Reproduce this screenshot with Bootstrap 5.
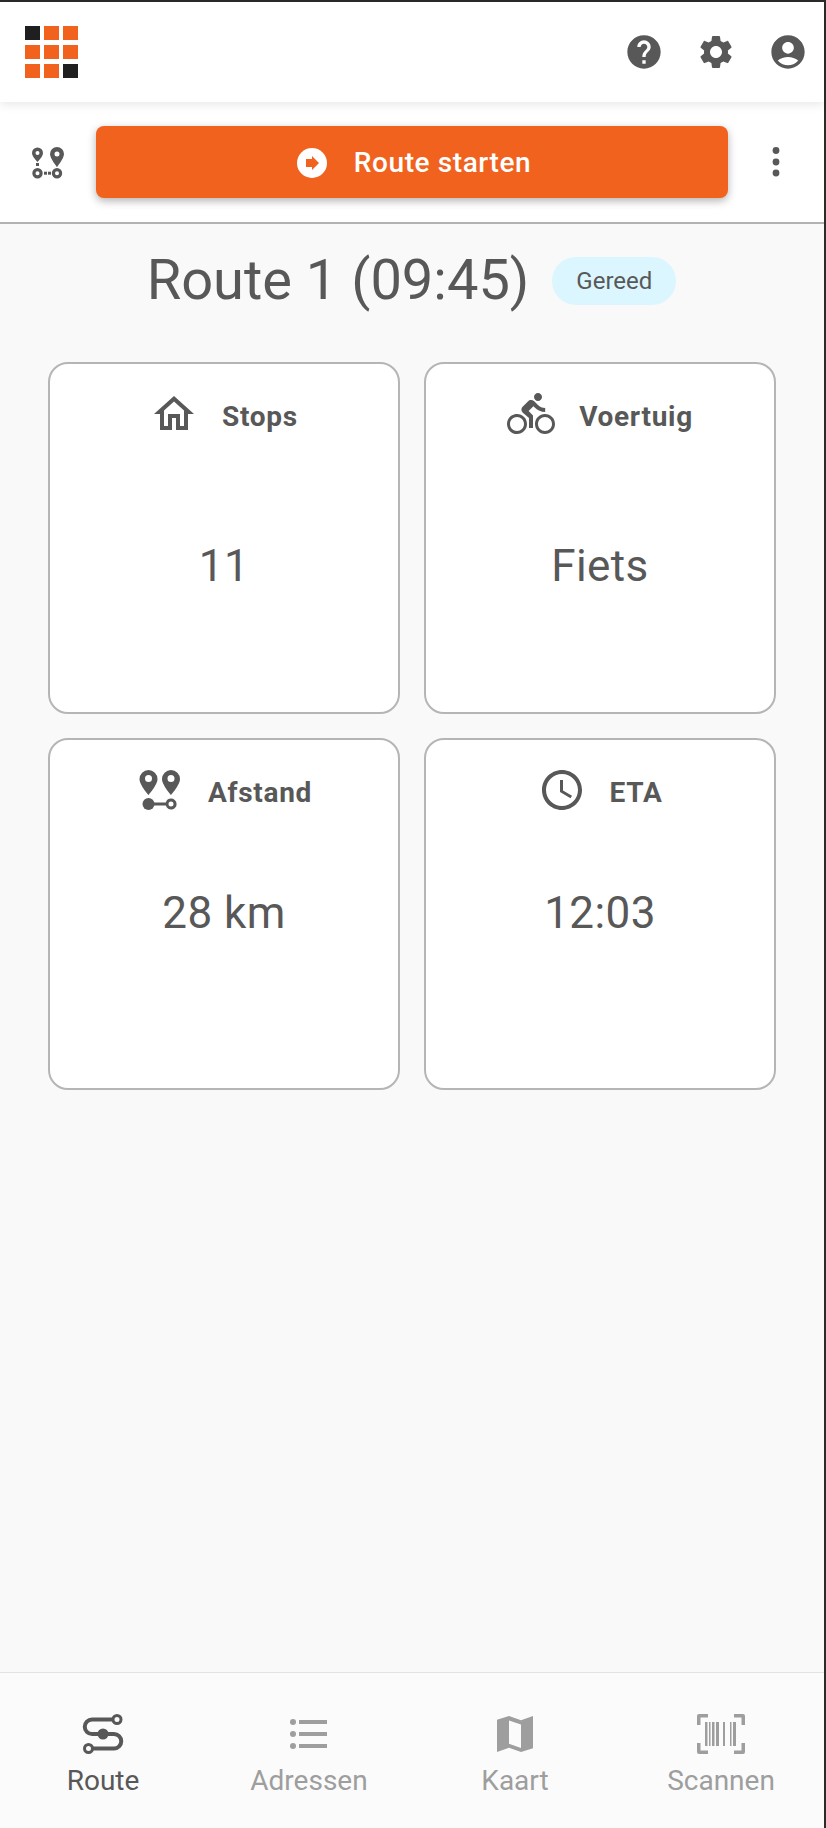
<!DOCTYPE html>
<html lang="nl">
<head>
<meta charset="UTF-8" />
<meta name="viewport" content="width=device-width, initial-scale=1" />
<title>Route</title>
<link href="https://cdn.jsdelivr.net/npm/bootstrap@5.3.0/dist/css/bootstrap.min.css" rel="stylesheet" />
<style>
  body {
    font-family: Roboto, "Liberation Sans", sans-serif;
    color: #585858;
    background: #2b2b2b;
  }
  svg {
    fill: currentColor;
    display: block;
    flex-shrink: 0;
  }
  .app-shell {
    height: 1828px;
    margin-right: 2px;
    padding-top: 2px;
  }
  .app-main {
    background: #f9f9f9;
  }
  .top-bar {
    height: 100px;
    padding: 0 16px 0 25px;
    background: #fff;
    box-shadow: 0 2px 10px rgba(0, 0, 0, .1);
    position: relative;
    z-index: 2;
  }
  .logo-grid {
    display: grid;
    grid-template-columns: repeat(3, 14.5px);
    grid-auto-rows: 14.5px;
    gap: 4.7px;
  }
  .logo-grid span {
    background: #f0621e;
  }
  .logo-grid .logo-dark {
    background: #1f1f1f;
  }
  .top-icons {
    gap: 32px;
  }
  .action-bar {
    height: 122px;
    background: #fff;
    border-bottom: 2px solid #b2b2b2;
  }
  .action-side {
    width: 96px;
  }
  .btn.start-btn {
    height: 72px;
    gap: 27px;
    padding: 1px 0 0 4px;
    background: #f0621e;
    border: 0;
    border-radius: 8px;
    color: #fff;
    font-size: 28px;
    font-weight: 500;
    letter-spacing: .6px;
    box-shadow: 0 3px 8px rgba(0, 0, 0, .3);
  }
  .title-row {
    height: 114px;
    padding-bottom: 3px;
    padding-right: 1px;
    gap: 23px;
  }
  .route-title {
    font-size: 56px;
    font-weight: 400;
    line-height: 1;
    margin: 0;
  }
  .status-pill {
    width: 124px;
    height: 48px;
    margin-top: 2px;
    border-radius: 24px;
    background: #dbf6ff;
    font-size: 24px;
  }
  .stat-grid {
    padding: 0 48px;
  }
  .card.stat-card {
    height: 352px;
    border: 2px solid #b5b5b5;
    border-radius: 20px;
    padding-top: 26px;
    color: #585858;
    background: #fff;
  }
  .stat-head {
    gap: 24px;
    font-size: 28px;
    font-weight: 700;
    letter-spacing: .7px;
  }
  .stat-head-text {
    padding-top: 5px;
  }
  .stat-value {
    font-size: 44px;
    line-height: 52px;
    letter-spacing: .4px;
    text-align: center;
  }
  .stat-value-high {
    margin-top: 102px;
  }
  .stat-value-low {
    margin-top: 73px;
  }
  .bottom-nav {
    height: 156px;
    background: #fbfbfb;
    border-top: 1px solid #e2e2e2;
    padding-top: 37px;
  }
  .nav-cell {
    color: #9e9e9e;
    font-size: 28px;
    line-height: 46px;
  }
  .nav-cell.is-active {
    color: #585858;
  }
</style>
</head>
<body>

<div class="app-shell d-flex flex-column">
  <header class="top-bar d-flex align-items-center justify-content-between">
    <div class="logo-grid" aria-label="Logo">
      <span class="logo-dark"></span><span></span><span></span>
      <span></span><span></span><span></span>
      <span></span><span></span><span class="logo-dark"></span>
    </div>
    <div class="top-icons d-flex">
      <svg width="40" height="40" viewBox="0 0 24 24"><path d="M12 2C6.48 2 2 6.48 2 12s4.48 10 10 10 10-4.48 10-10S17.52 2 12 2zm1 17h-2v-2h2v2zm2.07-7.75l-.9.92C13.45 12.9 13 13.5 13 15h-2v-.5c0-1.1.45-2.1 1.17-2.83l1.24-1.26c.37-.36.59-.86.59-1.41 0-1.1-.9-2-2-2s-2 .9-2 2H8c0-2.21 1.79-4 4-4s4 1.79 4 4c0 .88-.36 1.68-.93 2.25z"/></svg>
      <svg width="40" height="40" viewBox="0 0 24 24"><path d="M19.14 12.94c.04-.3.06-.61.06-.94 0-.32-.02-.64-.07-.94l2.03-1.58c.18-.14.23-.41.12-.61l-1.92-3.32c-.12-.22-.37-.29-.59-.22l-2.39.96c-.5-.38-1.03-.7-1.62-.94L14.4 2.81c-.04-.24-.24-.41-.48-.41h-3.84c-.24 0-.43.17-.47.41L9.25 5.35c-.59.24-1.13.57-1.62.94l-2.39-.96c-.22-.08-.47 0-.59.22L2.74 8.87c-.12.21-.08.47.12.61l2.03 1.58c-.05.3-.09.63-.09.94s.02.64.07.94l-2.03 1.58c-.18.14-.23.41-.12.61l1.92 3.32c.12.22.37.29.59.22l2.39-.96c.5.38 1.03.7 1.62.94l.36 2.54c.05.24.24.41.48.41h3.84c.24 0 .44-.17.47-.41l.36-2.54c.59-.24 1.13-.56 1.62-.94l2.39.96c.22.08.47 0 .59-.22l1.92-3.32c.12-.22.07-.47-.12-.61l-2.01-1.58zM12 15.6c-1.98 0-3.6-1.62-3.6-3.6s1.62-3.6 3.6-3.6 3.6 1.62 3.6 3.6-1.62 3.6-3.6 3.6z"/></svg>
      <svg width="40" height="40" viewBox="0 0 24 24"><path d="M12 2C6.48 2 2 6.48 2 12s4.48 10 10 10 10-4.48 10-10S17.52 2 12 2zm0 4c1.93 0 3.5 1.57 3.5 3.5S13.93 13 12 13s-3.5-1.57-3.5-3.5S10.07 6 12 6zm0 14c-2.03 0-4.43-.82-6.14-2.88C7.55 15.8 9.68 15 12 15s4.45.8 6.14 2.12C16.43 19.18 14.03 20 12 20z"/></svg>
    </div>
  </header>

  <div class="action-bar d-flex align-items-center">
    <div class="action-side d-flex justify-content-center">
      <svg width="40" height="40" viewBox="0 0 40 40">
        <path fill-rule="evenodd" d="M9.500 5.500a5.500 5.500 0 0 0-5.500 5.500c0 3.500 5.500 9 5.500 9s5.500-5.500 5.500-9a5.500 5.500 0 0 0-5.500-5.500zm0 3.500a2 2 0 1 1 0 4 2 2 0 0 1 0-4z"/>
        <path fill-rule="evenodd" d="M29 5a7 7 0 0 0-7 7c0 4.500 7 13 7 13s7-8.500 7-13a7 7 0 0 0-7-7zm0 4.500a2.500 2.500 0 1 1 0 5 2.500 2.500 0 0 1 0-5z"/>
        <path fill-rule="evenodd" d="M9.500 26a5.200 5.200 0 1 1 0 10.400 5.200 5.200 0 0 1 0-10.400zm0 3.200a2 2 0 1 0 0 4 2 2 0 0 0 0-4zM29 26a5.200 5.200 0 1 1 0 10.400 5.200 5.200 0 0 1 0-10.400zm0 3.200a2 2 0 1 0 0 4 2 2 0 0 0 0-4z"/>
        <rect x="8" y="21" width="3" height="3"/><rect x="16" y="29.700" width="3" height="3"/><rect x="20" y="29.700" width="3" height="3"/>
      </svg>
    </div>
    <button type="button" class="btn start-btn flex-grow-1 d-flex align-items-center justify-content-center">
      <svg width="30" height="30" viewBox="0 0 30 30"><circle cx="15" cy="15" r="15" fill="#fff"/><path fill="#f0621e" d="M9 11h6V8l7 7-7 7v-3H9z"/></svg>
      Route starten
    </button>
    <div class="action-side d-flex justify-content-center">
      <svg width="12" height="32" viewBox="0 0 12 32"><circle cx="6" cy="4.500" r="3.400"/><circle cx="6" cy="16" r="3.400"/><circle cx="6" cy="27" r="3.400"/></svg>
    </div>
  </div>

  <main class="app-main flex-grow-1">
    <div class="title-row d-flex align-items-center justify-content-center">
      <h1 class="route-title">Route 1 (09:45)</h1>
      <span class="status-pill d-inline-flex align-items-center justify-content-center">Gereed</span>
    </div>
    <div class="stat-grid mt-4">
      <div class="row g-4">
        <div class="col-6">
          <div class="card stat-card">
            <div class="stat-head d-flex align-items-center justify-content-center">
              <svg width="48" height="48" viewBox="0 0 24 24"><path d="M12 5.690l5 4.500V18h-2v-6H9v6H7v-7.810l5-4.500M12 3L2 12h3v8h6v-6h2v6h6v-8h3L12 3z"/></svg>
              <span class="stat-head-text">Stops</span>
            </div>
            <div class="stat-value stat-value-high">11</div>
          </div>
        </div>
        <div class="col-6">
          <div class="card stat-card">
            <div class="stat-head d-flex align-items-center justify-content-center">
              <svg width="48" height="48" viewBox="0 0 24 24"><path d="M15.500 5.500c1.100 0 2-.9 2-2s-.9-2-2-2-2 .9-2 2 .9 2 2 2zM5 12c-2.800 0-5 2.200-5 5s2.200 5 5 5 5-2.200 5-5-2.200-5-5-5zm0 8.500c-1.900 0-3.500-1.600-3.500-3.500s1.600-3.500 3.500-3.500 3.500 1.600 3.500 3.500-1.600 3.500-3.500 3.500zm5.800-10l2.400-2.400.8.8c1.300 1.300 3 2.100 5.100 2.100V9c-1.500 0-2.700-.6-3.600-1.500l-1.900-1.900c-.5-.4-1-.6-1.600-.6s-1.100.2-1.400.6L7.800 8.400c-.4.4-.6.9-.6 1.400 0 .6.2 1.100.6 1.400L11 14v5h2v-6.200l-2.200-2.300zM19 12c-2.800 0-5 2.200-5 5s2.200 5 5 5 5-2.200 5-5-2.200-5-5-5zm0 8.500c-1.900 0-3.500-1.600-3.500-3.500s1.600-3.500 3.500-3.500 3.500 1.600 3.500 3.500-1.600 3.500-3.500 3.500z"/></svg>
              <span class="stat-head-text">Voertuig</span>
            </div>
            <div class="stat-value stat-value-high">Fiets</div>
          </div>
        </div>
        <div class="col-6">
          <div class="card stat-card">
            <div class="stat-head d-flex align-items-center justify-content-center">
              <svg width="48" height="48" viewBox="0 0 48 48">
                <path fill-rule="evenodd" d="M12.500 4a9 9 0 0 0-9 9c0 6 9 16 9 16s9-10 9-16a9 9 0 0 0-9-9zm0 5a3.500 3.500 0 1 1 0 7 3.500 3.500 0 0 1 0-7z"/>
                <path fill-rule="evenodd" d="M35 4a9 9 0 0 0-9 9c0 6 9 16 9 16s9-10 9-16a9 9 0 0 0-9-9zm0 5a3.500 3.500 0 1 1 0 7 3.500 3.500 0 0 1 0-7z"/>
                <circle cx="12.500" cy="38" r="6"/>
                <path fill-rule="evenodd" d="M35 32.500a5.500 5.500 0 1 1-5.200 7H18v-3h11.800a5.500 5.500 0 0 1 5.200-4zm0 3a2.500 2.500 0 1 0 0 5 2.500 2.500 0 0 0 0-5z"/>
              </svg>
              <span class="stat-head-text">Afstand</span>
            </div>
            <div class="stat-value stat-value-low">28 km</div>
          </div>
        </div>
        <div class="col-6">
          <div class="card stat-card">
            <div class="stat-head d-flex align-items-center justify-content-center">
              <svg width="48" height="48" viewBox="0 0 24 24"><path d="M11.990 2C6.470 2 2 6.480 2 12s4.470 10 9.990 10C17.520 22 22 17.520 22 12S17.520 2 11.990 2zM12 20c-4.420 0-8-3.580-8-8s3.580-8 8-8 8 3.580 8 8-3.580 8-8 8z"/><path d="M12.500 7H11v6l5.250 3.150.75-1.230-4.500-2.670z"/></svg>
              <span class="stat-head-text">ETA</span>
            </div>
            <div class="stat-value stat-value-low">12:03</div>
          </div>
        </div>
      </div>
    </div>
  </main>

  <nav class="bottom-nav row g-0">
    <div class="col-3 nav-cell is-active d-flex flex-column align-items-center">
      <svg width="48" height="48" viewBox="0 0 48 48" fill="none">
        <path fill="none" stroke="currentColor" stroke-width="4" d="M34 9.500H13a7 7 0 0 0 0 14.500h22a7 7 0 0 1 0 14.500H14"/>
        <circle cx="38" cy="9.500" r="4" fill="none" stroke="currentColor" stroke-width="3"/>
        <circle cx="9.500" cy="38.500" r="4" fill="none" stroke="currentColor" stroke-width="3"/>
        <circle cx="24" cy="24" r="5.500" fill="currentColor"/>
      </svg>
      Route
    </div>
    <div class="col-3 nav-cell d-flex flex-column align-items-center">
      <svg width="48" height="48" viewBox="0 0 24 24"><circle cx="4" cy="6" r="1.500"/><circle cx="4" cy="12" r="1.500"/><circle cx="4" cy="18" r="1.500"/><rect x="7" y="5" width="14" height="2"/><rect x="7" y="11" width="14" height="2"/><rect x="7" y="17" width="14" height="2"/></svg>
      Adressen
    </div>
    <div class="col-3 nav-cell d-flex flex-column align-items-center">
      <svg width="48" height="48" viewBox="0 0 24 24"><path fill-rule="evenodd" d="M3 4.900L9 3l6 2.100L21 3v16.100L15 21l-6-2.100L3 21zM9 5.200v11.700l6 2.100V7.200z"/></svg>
      Kaart
    </div>
    <div class="col-3 nav-cell d-flex flex-column align-items-center">
      <svg width="48" height="48" viewBox="0 0 48 48">
        <path d="M0 15V6a2 2 0 0 1 2-2h9v3.500H3.500V15zM37 4h9a2 2 0 0 1 2 2v9h-3.500V7.500H37zM0 33h3.500v7.500H11V44H2a2 2 0 0 1-2-2zM48 33v9a2 2 0 0 1-2 2h-9v-3.500h7.500V33z"/>
        <rect x="8" y="12" width="2.500" height="24"/><rect x="12" y="12" width="1.500" height="24"/><rect x="15" y="12" width="2.500" height="24"/><rect x="19" y="12" width="3" height="24"/><rect x="26" y="12" width="2" height="24"/><rect x="33" y="12" width="1.500" height="24"/><rect x="36" y="12" width="3" height="24"/>
      </svg>
      Scannen
    </div>
  </nav>
</div>

<script src="https://cdn.jsdelivr.net/npm/bootstrap@5.3.0/dist/js/bootstrap.bundle.min.js"></script>
</body>
</html>
